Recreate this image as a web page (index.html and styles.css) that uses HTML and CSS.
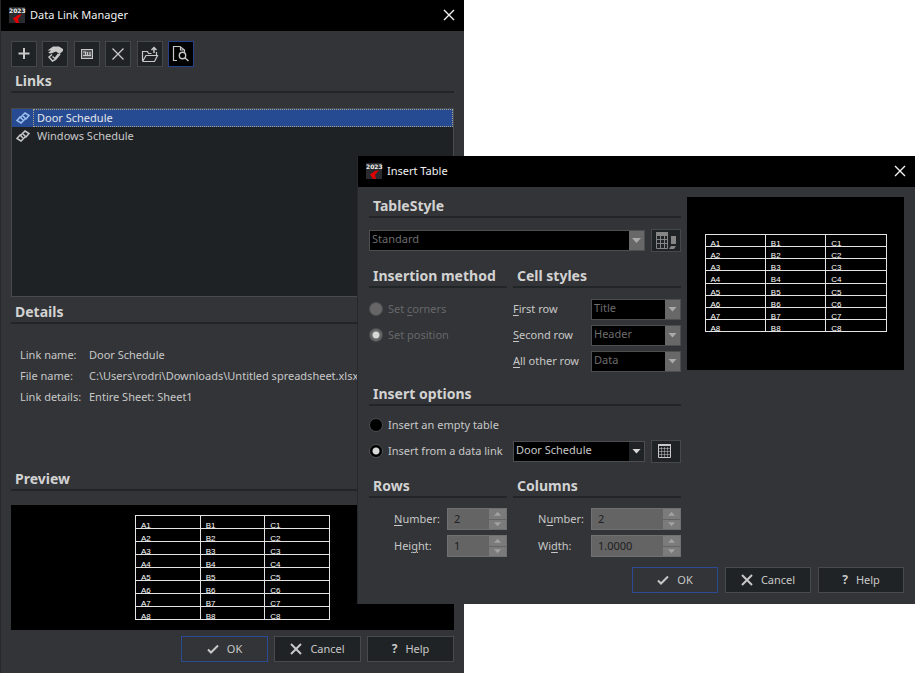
FILE: index.html
```html
<!DOCTYPE html>
<html lang="en">
<head>
<meta charset="utf-8">
<title>Data Link Manager</title>
<link rel="stylesheet" href="styles.css">
</head>
<body>
<svg class="defs" aria-hidden="true">
  <symbol id="logo" viewBox="0 0 16 16"><rect width="16" height="16" fill="#292b2e"/><path d="M13 7 9 8 4 11.500 7 16H10L9 12Z" fill="#e00000"/></symbol>
  <symbol id="close" viewBox="0 0 12 12"><path d="m1 1 10 10M11 1 1 11" fill="none" stroke="currentColor" stroke-width="1.400"/></symbol>
  <symbol id="check" viewBox="0 0 12 12"><path d="m1 6.500 3 3L11 2.500" fill="none" stroke="currentColor" stroke-width="2"/></symbol>
  <symbol id="cross" viewBox="0 0 12 12"><path d="m1 1 10 10M11 1 1 11" fill="none" stroke="currentColor" stroke-width="2"/></symbol>
  <symbol id="link" viewBox="0 0 14 14"><g fill="none" stroke="currentColor" stroke-width="1.500"><path d="M7 9 4.500 6.500 9 2l4 2.500L9.500 8.500"/><path d="M7 5 9.500 7.500 5 12 1 9.500 4.500 5.500"/></g></symbol>
</svg>
<main class="desktop">
  <section class="window manager" aria-label="Data Link Manager">
    <header class="titlebar">
      <span class="logo"><svg><use href="#logo"/></svg><b>2023</b></span>
      <h1>Data Link Manager</h1>
      <button class="close" aria-label="Close"><svg><use href="#close"/></svg></button>
    </header>
    <div class="manager-body">
      <div class="toolbar">
        <button class="tool" aria-label="New link"><svg viewBox="0 0 18 18"><path d="M9 3v11M3.500 8.500h11" stroke="currentColor" stroke-width="2"/></svg></button>
        <button class="tool" aria-label="Edit link"><svg viewBox="0 0 18 18"><path d="M1.500 5.500 7 1.500h6L17 4v2l-3.500 3L10 6.500 5 8.500 2 8l3-2.500Z" fill="currentColor"/><path d="M6 9.500 3 12l3.500 4 3-1.500L14 9M6.500 11.500l2.500 2L12.500 9" fill="none" stroke="currentColor" stroke-width="1.500"/></svg></button>
        <button class="tool" aria-label="Rename link"><svg viewBox="0 0 18 18"><path d="M3 4.500h12v9H3z" fill="currentColor" opacity=".3"/><path d="M3 4.500h12M3 13.500h12M3.500 4v10M14.500 4v10" fill="none" stroke="currentColor"/><path d="M5 7h2.500v4M9.500 7v4M12 7v4M5 10.500h8" fill="none" stroke="currentColor" stroke-width="1.200"/></svg></button>
        <button class="tool" aria-label="Delete link"><svg viewBox="0 0 18 18"><path d="m3.500 3.500 11 11M14.500 3.500l-11 11" stroke="currentColor" stroke-width="1.300"/></svg></button>
        <button class="tool" aria-label="Open file"><svg viewBox="0 0 18 18"><path d="M1.500 16V6.500h5l1 2h3M1.500 16.500h12l3-6H5l-3.500 6M15.500 10V7" fill="none" stroke="currentColor" stroke-width="1.200"/><path d="M13 8V3M10.500 5 13 2.500 15.500 5" fill="none" stroke="currentColor" stroke-width="1.500"/></svg></button>
        <button class="tool pressed" aria-label="Preview" aria-pressed="true"><svg viewBox="0 0 18 18"><path d="M5 15.500H1.500v-14H8L12.500 5v2M8.500 1.500V5h3" fill="none" stroke="currentColor" stroke-width="1.200"/><circle cx="10.500" cy="10.500" r="3.200" fill="none" stroke="currentColor" stroke-width="1.400"/><path d="m13 13 3.500 3" stroke="currentColor" stroke-width="1.400"/></svg></button>
      </div>
      <h2 class="heading">Links</h2>
      <ul class="links">
        <li class="selected"><svg><use href="#link"/></svg><a href="#door">Door Schedule</a></li>
        <li><svg><use href="#link"/></svg><a href="#windows">Windows Schedule</a></li>
      </ul>
      <h2 class="heading">Details</h2>
      <dl class="details">
        <dt>Link name:</dt><dd>Door Schedule</dd>
        <dt>File name:</dt><dd>C:\Users\rodri\Downloads\Untitled spreadsheet.xlsx</dd>
        <dt>Link details:</dt><dd>Entire Sheet: Sheet1</dd>
      </dl>
      <h2 class="heading">Preview</h2>
      <div class="preview wide">
        <table>
          <tr><td>A1<td>B1<td>C1</tr>
          <tr><td>A2<td>B2<td>C2</tr>
          <tr><td>A3<td>B3<td>C3</tr>
          <tr><td>A4<td>B4<td>C4</tr>
          <tr><td>A5<td>B5<td>C5</tr>
          <tr><td>A6<td>B6<td>C6</tr>
          <tr><td>A7<td>B7<td>C7</tr>
          <tr><td>A8<td>B8<td>C8</tr>
        </table>
      </div>
      <footer class="actions">
        <button class="action primary"><svg><use href="#check"/></svg>OK</button>
        <button class="action"><svg><use href="#cross"/></svg>Cancel</button>
        <button class="action"><b>?</b>Help</button>
      </footer>
    </div>
  </section>

  <section class="window insert" aria-label="Insert Table">
    <header class="titlebar">
      <span class="logo"><svg><use href="#logo"/></svg><b>2023</b></span>
      <h1>Insert Table</h1>
      <button class="close" aria-label="Close"><svg><use href="#close"/></svg></button>
    </header>
    <div class="insert-body">
      <div class="columns">
        <form class="form">
          <section class="full">
            <h2 class="heading">TableStyle</h2>
            <div class="style-row">
              <span class="select off"><select aria-label="Table style" disabled><option>Standard</option></select></span>
              <button type="button" class="square off" aria-label="Edit table style" disabled><svg viewBox="0 0 24 20"><path d="M2 1h12v4H2z" fill="currentColor"/><path d="M2.500 1.500h11v16h-11zM2 8.500h12M2 12.500h12M6.500 5v12M10.500 5v12" fill="none" stroke="currentColor"/><path d="M17 5h5v8h-5zM15 18l2-3h5l-2 3z" fill="currentColor"/></svg></button>
            </div>
          </section>
          <section>
            <h2 class="heading">Insertion method</h2>
            <div class="stack">
              <label class="radio off"><input type="radio" name="method" disabled><span>Set <u>c</u>orners</span></label>
              <label class="radio off"><input type="radio" name="method" checked disabled><span>Set position</span></label>
            </div>
          </section>
          <section>
            <h2 class="heading">Cell styles</h2>
            <div class="stack">
              <div class="field"><label for="first"><u>F</u>irst row</label><span class="select off"><select id="first" disabled><option>Title</option></select></span></div>
              <div class="field"><label for="second"><u>S</u>econd row</label><span class="select off"><select id="second" disabled><option>Header</option></select></span></div>
              <div class="field"><label for="other"><u>A</u>ll other row</label><span class="select off"><select id="other" disabled><option>Data</option></select></span></div>
            </div>
          </section>
          <section class="full">
            <h2 class="heading">Insert options</h2>
            <div class="options">
              <label class="radio"><input type="radio" name="source"><span>Insert an empty table</span></label>
              <div class="link-row">
                <label class="radio"><input type="radio" name="source" checked><span>Insert from a data link</span></label>
                <div class="style-row">
                  <span class="select"><select aria-label="Data link"><option>Door Schedule</option></select></span>
                  <button type="button" class="square" aria-label="Data link manager"><svg viewBox="0 0 24 20"><path d="M4 3h13v2H4z" fill="currentColor"/><path d="M4.500 3.500h12v13h-12z" fill="none" stroke="currentColor"/><path d="M5 7.500h11M5 10.500h11M5 13.500h11M7.500 6v10M10.500 6v10M13.500 6v10" fill="none" stroke="currentColor" opacity=".5"/></svg></button>
                </div>
              </div>
            </div>
          </section>
          <section>
            <h2 class="heading">Rows</h2>
            <div class="numbers">
              <label for="rows"><u>N</u>umber:</label><span class="spin"><input id="rows" value="2" disabled><span class="steps"><button type="button" class="up" aria-label="Increase" disabled></button><button type="button" class="down" aria-label="Decrease" disabled></button></span></span>
              <label for="height">Hei<u>g</u>ht:</label><span class="spin"><input id="height" value="1" disabled><span class="steps"><button type="button" class="up" aria-label="Increase" disabled></button><button type="button" class="down" aria-label="Decrease" disabled></button></span></span>
            </div>
          </section>
          <section>
            <h2 class="heading">Columns</h2>
            <div class="numbers">
              <label for="cols">N<u>u</u>mber:</label><span class="spin"><input id="cols" value="2" disabled><span class="steps"><button type="button" class="up" aria-label="Increase" disabled></button><button type="button" class="down" aria-label="Decrease" disabled></button></span></span>
              <label for="width">Wi<u>d</u>th:</label><span class="spin"><input id="width" value="1.0000" disabled><span class="steps"><button type="button" class="up" aria-label="Increase" disabled></button><button type="button" class="down" aria-label="Decrease" disabled></button></span></span>
            </div>
          </section>
        </form>
        <div class="preview tall">
          <table>
            <tr><td>A1<td>B1<td>C1</tr>
            <tr><td>A2<td>B2<td>C2</tr>
            <tr><td>A3<td>B3<td>C3</tr>
            <tr><td>A4<td>B4<td>C4</tr>
            <tr><td>A5<td>B5<td>C5</tr>
            <tr><td>A6<td>B6<td>C6</tr>
            <tr><td>A7<td>B7<td>C7</tr>
            <tr><td>A8<td>B8<td>C8</tr>
          </table>
        </div>
      </div>
      <footer class="actions">
        <button class="action primary"><svg><use href="#check"/></svg>OK</button>
        <button class="action"><svg><use href="#cross"/></svg>Cancel</button>
        <button class="action"><b>?</b>Help</button>
      </footer>
    </div>
  </section>
</main>
</body>
</html>
```
FILE: styles.css
```css
* { box-sizing: border-box; }
body {
  margin: 0;
  background: #fff;
  color: #c8c8c8;
  font: 11px/16px "Noto Sans", sans-serif;
}
button, input, select { font: inherit; color: inherit; margin: 0; padding: 0; border-radius: 0; }
h1, h2, ul, dl, dd { margin: 0; padding: 0; }
svg { display: block; flex: none; }
.defs { display: none; }
.desktop { position: relative; min-height: 100vh; overflow: hidden; }

.window { position: absolute; background: #323437; }
.manager { left: 0; top: 0; width: calc(50% + 6px); border-left: 1px solid #26292c; }
.insert { left: calc(50% - 101px); right: 1px; top: 156px; border-left: 1px solid #26292c; }

.titlebar {
  display: flex;
  align-items: center;
  gap: 5px;
  height: 31px;
  padding: 0 8px 1px;
  background: #000;
  color: #f2f2f2;
}
.titlebar h1 { flex: 1; font-size: 11px; font-weight: 400; }
.logo { position: relative; width: 16px; height: 16px; }
.logo svg { width: 16px; height: 16px; }
.logo b { position: absolute; left: 0; top: 0; font: bold 6px/7px "DejaVu Sans", sans-serif; }
.close { padding: 1px; border: 0; background: none; }
.close svg { width: 12px; height: 12px; }

.heading {
  padding-left: 4px;
  border-bottom: 2px solid #222528;
  color: #d2d2d2;
  font-size: 14px;
  font-weight: 700;
  line-height: 20px;
}

.manager-body { padding: 10px 10px 11px; }
.toolbar { display: flex; justify-content: space-between; width: 183px; margin-bottom: 4px; }
.tool {
  display: grid;
  place-items: center;
  width: 26px;
  height: 26px;
  border: 1px solid #44474a;
  background: #202326;
}
.tool svg { width: 18px; height: 18px; }
.tool.pressed { border-color: #27418c; background: #000; }

.links {
  height: 189px;
  margin: 15px 0 5px;
  border: 1px solid #484b4e;
  background: #1f2225;
  list-style: none;
}
.links li { display: flex; align-items: center; gap: 3px; height: 18px; padding-left: 4px; }
.links svg { width: 14px; height: 14px; }
.links a {
  flex: 1;
  padding-left: 3px;
  border: 1px solid transparent;
  color: inherit;
  text-decoration: none;
}
.links .selected { background: #274b93; color: #e4e6ea; }
.links .selected svg { color: #9cc0ee; }
.links .selected a { border: 1px dotted #a9a58f; }

.details {
  display: grid;
  grid-template-columns: 69px 1fr;
  margin: 20px 0 62px 9px;
  line-height: 21px;
  white-space: nowrap;
}

.preview { display: grid; background: #000; justify-content: center; }
.preview.wide { height: 125px; margin: 14px 0 6px; padding-top: 10px; }
.preview table {
  border-collapse: collapse;
  align-self: start;
  table-layout: fixed;
  color: #fff;
  font: 8px/4px "Liberation Sans", sans-serif;
}
.preview td { padding: 8px 0 0 5px; border: 1px solid #e4e4e4; }
.wide table { width: 195px; }
.tall table { width: 182px; height: 98px; }
.tall td { padding: 7px 0 0 5px; }

.actions { display: flex; justify-content: flex-end; gap: 6px; }
.insert .actions { gap: 7px; }
.insert .action { width: 86px; }
.action {
  display: flex;
  align-items: center;
  justify-content: center;
  gap: 8px;
  width: 87px;
  height: 26px;
  border: 1px solid #484b4e;
  background: #202326;
}
.action svg { width: 12px; height: 12px; }
.action b { font-size: 12px; }
.action.primary { border-color: #2f4a94; background: #323437; }

.insert-body { padding: 9px 11px 11px; }
.columns { display: flex; gap: 6px; margin-bottom: 10px; }
.form { flex: 1; display: grid; grid-template-columns: 138px 1fr; column-gap: 6px; }
.full { grid-column: 1 / -1; }
.tall { width: 217px; height: 173px; margin-top: 1px; padding-top: 37px; }

.style-row { display: grid; grid-template-columns: 1fr 30px; gap: 6px; align-items: center; }
.full > .style-row { margin: 11px 0 14px; }
.select { position: relative; display: grid; height: 21px; border: 1px solid #4c4e50; background: #000; }
.select select {
  appearance: none;
  padding: 0 16px 4px 2px;
  border: 0;
  background: none;
  opacity: 1;
  line-height: 15px;
}
.select::before { content: ""; position: absolute; right: 0; top: 0; bottom: 0; width: 15px; background: #202326; pointer-events: none; }
.select::after {
  content: "";
  position: absolute;
  right: 3px;
  top: 7px;
  width: 9px;
  height: 5px;
  background: #d8d8d8;
  clip-path: polygon(0 0, 100% 0, 50% 100%);
  pointer-events: none;
}
.select.off { color: #6c6c6c; }
.select.off::before { background: #686868; }
.select.off::after { background: #aaa; }
.square { height: 23px; border: 1px solid #46494c; background: #202326; display: grid; place-items: center; }
.square svg { width: 24px; height: 20px; }
.square.off { color: #858585; }

.stack { margin: 8px 0 10px; }
.radio { display: flex; align-items: center; gap: 5px; height: 26px; white-space: nowrap; }
.radio input {
  appearance: none;
  flex: none;
  width: 14px;
  height: 14px;
  border: 1px solid #4c4e50;
  border-radius: 50%;
  background: #000;
}
.radio input:checked { background: radial-gradient(circle, #d8d8d8 3px, #000 4px); }
.radio.off { color: #66686a; }
.radio.off input { background: #666; }
.radio.off input:checked { background: radial-gradient(circle, #d8d8d8 3px, #666 4px); }
.field { display: grid; grid-template-columns: 1fr 90px; align-items: center; height: 26px; white-space: nowrap; }
.options { margin: 6px 0 12px; }
.link-row { display: grid; grid-template-columns: 138px 1fr; gap: 6px; align-items: center; height: 26px; }
u { text-underline-offset: 2px; }

.numbers {
  display: grid;
  grid-template-columns: 53px 1fr;
  row-gap: 5px;
  align-items: center;
  margin-top: 10px;
  padding-left: 25px;
}
.spin { display: grid; grid-template-columns: 1fr 17px; height: 22px; background: #646464; border: 1px solid #707070; }
.spin input { min-width: 0; width: 100%; padding-left: 6px; border: 0; background: none; color: #202020; }
.steps { display: grid; gap: 1px; }
.steps button { border: 0; background: #7b7b7b; display: grid; place-items: center; }
.steps button::before { content: ""; width: 7px; height: 4px; background: #a2a2a2; clip-path: polygon(50% 0, 100% 100%, 0 100%); }
.steps .down::before { clip-path: polygon(0 0, 100% 0, 50% 100%); }
```
